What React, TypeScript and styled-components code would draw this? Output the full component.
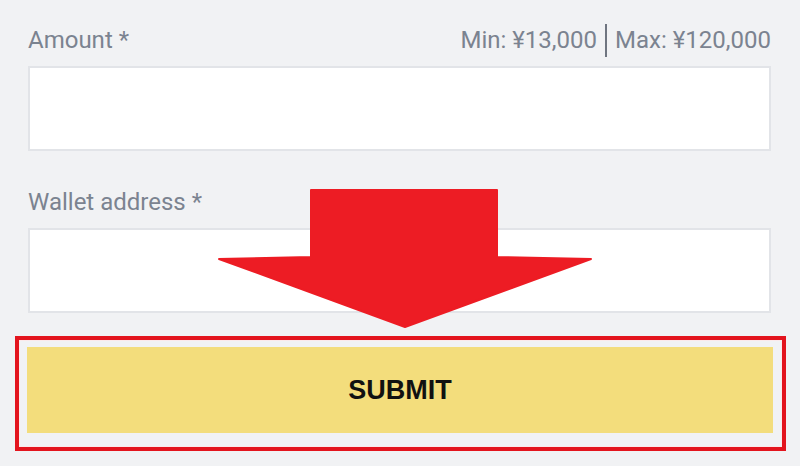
import React from "react";
import styled, { createGlobalStyle } from "styled-components";

const Global = createGlobalStyle`
  html, body { margin: 0; padding: 0; background: #f1f2f4; }
  body { font-family: Roboto, "Liberation Sans", sans-serif; }
`;

const Page = styled.div`
  position: relative;
  width: 800px;
  height: 466px;
  box-sizing: border-box;
  padding: 24px 29px 0 28px;
  display: flex;
  flex-direction: column;
  overflow: hidden;
`;

const Field = styled.div<{ $gap?: number }>`
  display: flex;
  flex-direction: column;
  gap: 9px;
  margin-top: ${(p) => p.$gap ?? 0}px;
`;

const LabelRow = styled.div`
  display: flex;
  align-items: center;
  justify-content: space-between;
  height: 33px;
  font-size: 24px;
  line-height: 33px;
  color: #7b8390;
`;

const Limits = styled.div`
  display: flex;
  align-items: center;
  gap: 8px;
`;

const Divider = styled.span`
  display: block;
  width: 2px;
  height: 33px;
  background: #6f7580;
`;

const Input = styled.div`
  height: 85px;
  box-sizing: border-box;
  background: #ffffff;
  border: 2px solid #e2e4e8;
`;

const Frame = styled.div`
  margin: 23px -15px 0 -13px;
  border: 4px solid #e3141d;
  box-shadow: inset 0 0 0 1px #fbe9ea;
  padding: 7px 9px 14px 8px;
`;

const SubmitButton = styled.button`
  width: 100%;
  height: 86px;
  border: none;
  background: #f3dd7c;
  color: #111111;
  font-family: "Liberation Sans", Arial, sans-serif;
  font-weight: 700;
  font-size: 27px;
  display: flex;
  align-items: center;
  justify-content: center;
  padding: 0;
`;

const ArrowSvg = styled.svg`
  position: absolute;
  left: 0;
  top: 0;
  width: 800px;
  height: 466px;
  pointer-events: none;
`;

export default function App() {
  return (
    <>
      <Global />
      <Page>
        <Field>
          <LabelRow>
            <span>Amount *</span>
            <Limits>
              <span>Min: ¥13,000</span>
              <Divider />
              <span>Max: ¥120,000</span>
            </Limits>
          </LabelRow>
          <Input />
        </Field>
        <Field $gap={35}>
          <LabelRow>
            <span>Wallet address *</span>
          </LabelRow>
          <Input />
        </Field>
        <Frame>
          <SubmitButton>SUBMIT</SubmitButton>
        </Frame>
        <ArrowSvg viewBox="0 0 800 466">
          <polygon
            points="311,190 497,190 497,257 591,259 405,327 219,259 311,257"
            fill="#ed1c24"
            stroke="#ed1c24"
            strokeWidth="2"
            strokeLinejoin="round"
          />
        </ArrowSvg>
      </Page>
    </>
  );
}
